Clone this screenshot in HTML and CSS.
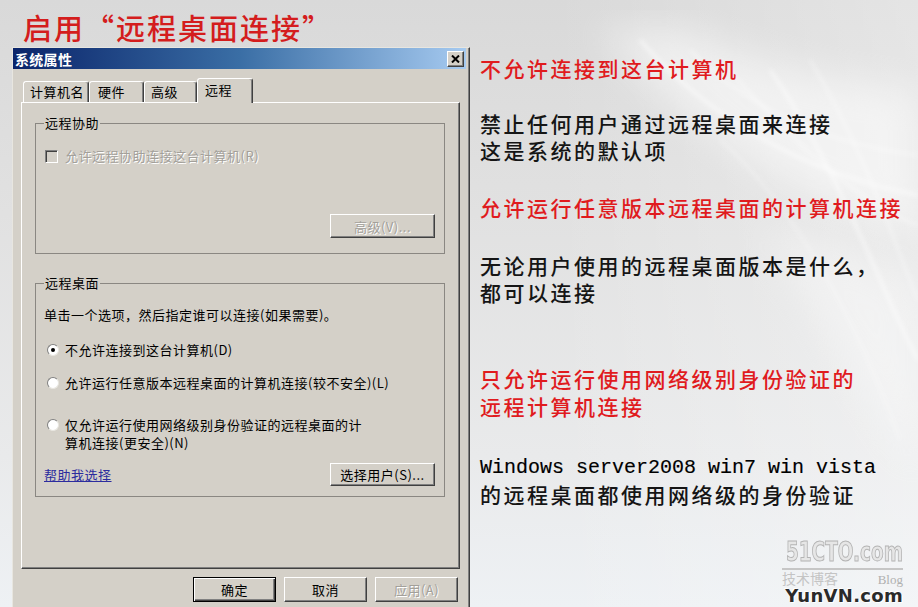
FILE: index.html
```html
<!DOCTYPE html>
<html lang="zh-CN">
<head>
    <meta charset="UTF-8">
    <meta name="viewport" content="width=device-width, initial-scale=1.0">
    <title>启用远程桌面连接</title>
    <link rel="stylesheet" href="styles.css">
</head>
<body>
    <div class="slide">
        <!-- silver swoosh behind the slide -->
        <svg class="backdrop" width="918" height="607" viewBox="0 0 918 607">
            <defs>
                <filter id="soft"><feGaussianBlur stdDeviation="18"/></filter>
                <filter id="thin"><feGaussianBlur stdDeviation="2"/></filter>
            </defs>
            <path d="M600,30 C680,120 770,190 918,230 L918,90 C830,80 740,60 690,30 Z" fill="#fff" opacity="0.5" filter="url(#soft)"/>
            <path d="M760,230 C820,320 880,420 918,470 L918,290 C880,260 820,240 760,230 Z" fill="#fff" opacity="0.35" filter="url(#soft)"/>
            <g fill="none" stroke="#fff" filter="url(#thin)">
                <path d="M640,40 C710,120 810,175 918,195" stroke-width="3" opacity="0.55"/>
                <path d="M690,50 C750,110 830,145 918,155" stroke-width="2" opacity="0.45"/>
                <path d="M720,60 C790,140 860,205 918,225" stroke-width="2" opacity="0.45"/>
                <path d="M770,70 C840,170 885,300 918,360" stroke-width="3" opacity="0.55"/>
                <path d="M810,60 C870,160 900,260 918,300" stroke-width="2" opacity="0.45"/>
                <path d="M720,140 C800,210 860,330 900,440" stroke-width="2" opacity="0.35"/>
            </g>
        </svg>

        <h1 class="slide-title">启用“远程桌面连接”</h1>

        <div class="main">
            <div class="dialog">
                <div class="titlebar">
                    <span class="titlebar-text">系统属性</span>
                    <span class="close-btn">
                        <svg width="9" height="8" viewBox="0 0 9 8"><path d="M1,0.5 L8,7.5 M8,0.5 L1,7.5" stroke="#000" stroke-width="2"/></svg>
                    </span>
                </div>

                <div class="tabs">
                    <span class="tab tab-computer">计算机名</span>
                    <span class="tab tab-hardware">硬件</span>
                    <span class="tab tab-advanced">高级</span>
                    <span class="tab tab-remote active">远程</span>
                </div>

                <div class="panel">
                    <fieldset class="group group-assist">
                        <legend>远程协助</legend>
                        <label class="check disabled"><span class="checkbox"></span>允许远程协助连接这台计算机(R)</label>
                        <div class="group-actions">
                            <button class="btn" disabled>高级(V)...</button>
                        </div>
                    </fieldset>

                    <fieldset class="group group-desktop">
                        <legend>远程桌面</legend>
                        <p class="hint">单击一个选项，然后指定谁可以连接(如果需要)。</p>
                        <label class="option option-first"><span class="radio checked"></span>不允许连接到这台计算机(D)</label>
                        <label class="option option-second"><span class="radio"></span>允许运行任意版本远程桌面的计算机连接(较不安全)(L)</label>
                        <label class="option option-third"><span class="radio"></span><span>仅允许运行使用网络级别身份验证的远程桌面的计<br>算机连接(更安全)(N)</span></label>
                        <div class="group-footer">
                            <a class="help-link" href="#">帮助我选择</a>
                            <button class="btn btn-users">选择用户(S)...</button>
                        </div>
                    </fieldset>
                </div>

                <div class="dialog-buttons">
                    <button class="btn btn-sm btn-default">确定</button>
                    <button class="btn btn-sm">取消</button>
                    <button class="btn btn-sm" disabled>应用(A)</button>
                </div>
            </div>

            <div class="notes">
                <p class="note note-red note-first">不允许连接到这台计算机</p>
                <p class="note note-gap">禁止任何用户通过远程桌面来连接<br>这是系统的默认项</p>
                <p class="note note-red note-gap2">允许运行任意版本远程桌面的计算机连接</p>
                <p class="note note-gap3">无论用户使用的远程桌面版本是什么，<br>都可以连接</p>
                <p class="note note-red note-wide">只允许运行使用网络级别身份验证的<br>远程计算机连接</p>
                <p class="note note-gap3 note-tight"><span class="mono">Windows server2008 win7 win vista</span><br>的远程桌面都使用网络级的身份验证</p>
            </div>
        </div>

        <div class="watermark">
            <div class="wm-site"><span class="wm-site-text">51CTO.com</span></div>
            <div class="wm-blog"><span>技术博客</span><span class="wm-blog-en">Blog</span></div>
            <div class="wm-yun">YunVN.com</div>
        </div>
    </div>
</body>
</html>
```
FILE: styles.css
```css
/* Slide */
* {
    box-sizing: border-box;
}

body {
    margin: 0;
    width: 918px;
    height: 607px;
    overflow: hidden;
    font-family: "Noto Sans CJK SC", sans-serif;
    background:
        linear-gradient(90deg, rgba(255, 255, 255, 0) 60%, rgba(255, 255, 255, 0.3) 100%),
        linear-gradient(180deg, #d9d9d9 0%, #e1e1e1 35%, #e9eaeb 75%, #eef1f4 100%);
}

.slide {
    position: relative;
    height: 607px;
}

.backdrop {
    position: absolute;
    top: 0;
    left: 0;
}

.slide-title {
    position: relative;
    margin: 0;
    height: 47px;
    padding: 7px 0 0 23px;
    font-size: 29px;
    line-height: 40px;
    letter-spacing: 2px;
    font-weight: 500;
    color: #d41d1d;
}

.main {
    position: relative;
    display: flex;
}

/* Dialog (classic Windows look) */
.dialog {
    width: 458px;
    height: 570px;
    margin-left: 12px;
    padding: 0 3px 0 0;
    background: #d4d0c8;
    border-top: 1px solid #e8e6e0;
    border-left: 1px solid #e8e6e0;
    border-right: 1px solid #404040;
    box-shadow: inset -1px 0 #808080;
    font-size: 13px;
    letter-spacing: 0.5px;
    color: #000;
}

.titlebar {
    height: 21px;
    display: flex;
    align-items: center;
    justify-content: space-between;
    padding: 0 2px;
    background: linear-gradient(90deg, #0a246a 0%, #3a6ea5 50%, #a6caf0 100%);
}

.titlebar-text {
    color: #fff;
    font-weight: bold;
    font-size: 14px;
    letter-spacing: 0.3px;
}

.close-btn {
    width: 17px;
    height: 16px;
    display: flex;
    align-items: center;
    justify-content: center;
    background: #d4d0c8;
    border: 1px solid;
    border-color: #fff #404040 #404040 #fff;
    box-shadow: inset -1px -1px #808080;
}

.tabs {
    position: relative;
    z-index: 1;
    display: flex;
    align-items: flex-end;
    height: 24px;
    margin-top: 9px;
    padding-left: 10px;
}

.tab {
    height: 21px;
    padding-left: 6px;
    line-height: 20px;
    background: #d4d0c8;
    border: 1px solid;
    border-bottom: none;
    border-color: #fff #404040 transparent #fff;
    border-radius: 3px 3px 0 0;
    box-shadow: inset -1px 0 #808080;
}

.tab-computer { width: 66px; }
.tab-hardware { width: 55px; padding-left: 8px; }
.tab-advanced { width: 53px; }
.tab-remote { width: 56px; padding-left: 7px; }

.tab.active {
    height: 25px;
    margin-bottom: -1px;
    line-height: 22px;
}

.panel {
    height: 467px;
    margin: 0 6px 0 8px;
    padding: 0 14px 0 13px;
    border: 1px solid;
    border-color: #fff #404040 #404040 #fff;
    box-shadow: inset -1px -1px #808080;
}

/* Group boxes */
.group {
    margin: 0;
    padding: 0 9px 15px 8px;
    border: 1px solid #8a8782;
}

.group legend {
    padding: 0 1px;
    line-height: 16px;
}

.group-assist {
    margin-top: 12px;
}

.group-desktop {
    margin-top: 21px;
    padding-bottom: 10px;
}

.check {
    display: flex;
    align-items: center;
    gap: 7px;
    margin: 17px 0 0 1px;
    line-height: 16px;
}

.disabled {
    color: #a3a09a;
    text-shadow: 1px 1px #fff;
}

.checkbox {
    width: 13px;
    height: 13px;
    background: #d4d0c8;
    border: 1px solid;
    border-color: #808080 #fff #fff #808080;
    box-shadow: inset 1px 1px #404040;
}

.group-actions {
    display: flex;
    justify-content: flex-end;
    margin-top: 50px;
}

.hint {
    margin: 16px 0 0;
    line-height: 16px;
}

.option {
    display: flex;
    align-items: flex-start;
    gap: 6px;
    margin-left: 3px;
    line-height: 16px;
}

.option-first { margin-top: 19px; }
.option-second { margin-top: 17px; }
.option-third { margin-top: 25px; line-height: 18px; }

.radio {
    position: relative;
    flex: none;
    width: 12px;
    height: 12px;
    margin-top: 2px;
    border-radius: 50%;
    background: #fff;
    border: 1px solid;
    border-color: #808080 #e8e6e0 #e8e6e0 #808080;
}

.option-third .radio {
    margin-top: 3px;
}

.radio.checked::after {
    content: "";
    position: absolute;
    left: 3px;
    top: 3px;
    width: 4px;
    height: 4px;
    border-radius: 50%;
    background: #000;
}

.group-footer {
    display: flex;
    justify-content: space-between;
    align-items: center;
    margin-top: 11px;
}

.help-link {
    color: #2c2c9e;
    text-decoration: underline;
}

/* Buttons */
.btn {
    width: 105px;
    height: 24px;
    padding: 0;
    font-family: "Noto Sans CJK SC", sans-serif;
    font-size: 13px;
    letter-spacing: 0.5px;
    color: #000;
    background: #d4d0c8;
    border: 1px solid;
    border-color: #fff #404040 #404040 #fff;
    box-shadow: inset -1px -1px #808080;
}

.btn:disabled {
    color: #a3a09a;
    text-shadow: 1px 1px #fff;
}

.btn-users {
    height: 23px;
}

.dialog-buttons {
    display: flex;
    justify-content: flex-end;
    gap: 8px;
    margin-top: 8px;
    padding-right: 8px;
}

.btn-sm {
    width: 83px;
    height: 25px;
}

.btn-default {
    border: 1px solid #000;
    box-shadow: inset 1px 1px #fff, inset -1px -1px #404040, inset -2px -2px #808080;
}

/* Notes on the right */
.notes {
    padding-left: 10px;
    font-size: 21px;
    line-height: 27px;
    letter-spacing: 2.5px;
    font-weight: 500;
    color: #151515;
    white-space: nowrap;
}

.note {
    margin: 0;
}

.note-red {
    color: #e01b1e;
}

.note-first { margin-top: 8px; }
.note-gap { margin-top: 28px; }
.note-gap2 { margin-top: 30px; }
.note-gap3 { margin-top: 31px; }
.note-wide { margin-top: 58px; line-height: 28px; }
.note-tight { line-height: 26px; }

.mono {
    font-family: "Liberation Mono", monospace;
    font-size: 20px;
    letter-spacing: 0;
    font-weight: normal;
    color: #000;
    -webkit-text-stroke: 0.15px #000;
}

/* Watermark */
.watermark {
    position: absolute;
    top: 536px;
    right: 15px;
    width: 121px;
}

.wm-site {
    display: flex;
    justify-content: flex-end;
    height: 34px;
    border-bottom: 2px solid #c6c6c6;
    white-space: nowrap;
}

.wm-site-text {
    flex: none;
    font-family: "DejaVu Sans Condensed", "DejaVu Sans", sans-serif;
    font-stretch: condensed;
    font-weight: bold;
    font-size: 27px;
    line-height: 32px;
    color: #e6e6e6;
    -webkit-text-stroke: 1px #b4b4b4;
    transform: scaleX(0.76);
    transform-origin: right center;
}

.wm-blog {
    display: flex;
    justify-content: space-between;
    align-items: baseline;
    height: 17px;
    font-size: 14px;
    line-height: 16px;
    color: #c4c4c4;
}

.wm-blog-en {
    font-family: "Liberation Serif", serif;
    font-size: 13px;
    color: #b0b0b0;
}

.wm-yun {
    font-family: "DejaVu Sans", sans-serif;
    font-weight: bold;
    font-size: 18px;
    line-height: 18px;
    letter-spacing: 0.3px;
    text-align: right;
    color: #2a2a2a;
    text-shadow: 1px 1px #fff, -1px -1px #fff;
}
```
